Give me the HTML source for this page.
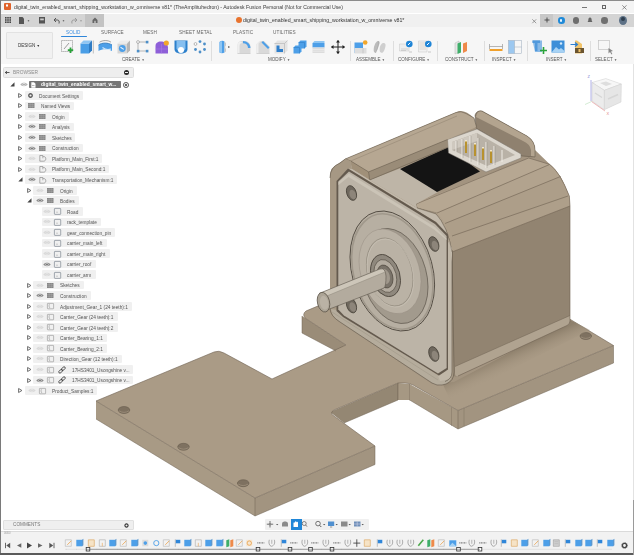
<!DOCTYPE html><html><head><meta charset="utf-8"><style>
*{box-sizing:border-box;margin:0;padding:0}
html,body{width:634px;height:555px;overflow:hidden;background:#fff;font-family:"Liberation Sans",sans-serif;position:relative}
.a{position:absolute}
.tx{position:absolute;white-space:nowrap;line-height:1;will-change:transform}
svg{position:absolute;overflow:visible}
.pill{position:absolute}
</style></head><body><svg style="left:0;top:0" width="634" height="555" viewBox="0 0 634 555"><path d="M96 401 L255 498 L255 516 L96 419 Z" fill="#a89a85"/><path d="M255 498 L375 446 L375 464.5 L255 516 Z" fill="#a29480"/><path d="M330 412 L398 383 L398 400 L344 423 Z" fill="#948773"/><path d="M398 383 L409.6 384 L458 410.5 L458 429 L409.6 400 L398 400 Z" fill="#a69883"/><path d="M458 410.5 L613.5 345.5 L613.5 363 L458 429 Z" fill="#a29480"/><path d="M302 316 L346 345 L336 351 L302 333 Z" fill="#9a8c78"/><path d="M96 401 L214 352 Q219 350 224 353 L272 379 L346 345 L305 318 Q302 314 306 311 L420 262 L568 318 L613.5 345.5 L458 410.5 L413 385 Q409 383 405 383 L398 383 L334 410 Q329 413 334 416 L375 446 L255 498 Z" fill="#aa9b86"/><path d="M96 401 L214 352 Q219 350 224 353 L272 379 L346 345 L305 318 Q302 314 306 311 L330 301 M568 318 L613.5 345.5 L458 410.5 L413 385 Q409 383 405 383 L398 383 L334 410 Q329 413 334 416 L375 446 L255 498 L96 401" fill="none" stroke="#6e6252" stroke-width="0.6"/><path d="M96 419 L255 516 L375 464.5 L375 446 M255 498 L255 516 M458 410.5 L458 429 L613.5 363 L613.5 345.5 M398 383 L398 400 L344 423 M409.6 400 L458 429 M302 316 L302 333 L336 351" fill="none" stroke="#6e6252" stroke-width="0.5"/><path d="M397.5 383 V400 M409.5 384 V400.5 M451.5 407.5 V426 M464 408 V426" stroke="#7d7060" stroke-width="0.45"/><ellipse cx="124" cy="410" rx="5.8" ry="3.5" fill="#7e7160" stroke="#5e5447" stroke-width="0.5"/><path d="M119 410.8 Q124 414 129 410.8" fill="none" stroke="#a99b86" stroke-width="0.6"/><ellipse cx="183.5" cy="446.8" rx="5.8" ry="3.5" fill="#7e7160" stroke="#5e5447" stroke-width="0.5"/><path d="M178.5 447.6 Q183.5 450.8 188.5 447.6" fill="none" stroke="#a99b86" stroke-width="0.6"/><ellipse cx="243.2" cy="483.2" rx="5.8" ry="3.5" fill="#7e7160" stroke="#5e5447" stroke-width="0.5"/><path d="M238.2 484.0 Q243.2 487.2 248.2 484.0" fill="none" stroke="#a99b86" stroke-width="0.6"/><ellipse cx="585.8" cy="336" rx="5.8" ry="3.5" fill="#7e7160" stroke="#5e5447" stroke-width="0.5"/><path d="M580.8 336.8 Q585.8 340 590.8 336.8" fill="none" stroke="#a99b86" stroke-width="0.6"/><defs><linearGradient id="sh1" gradientUnits="userSpaceOnUse" x1="512" y1="351" x2="520" y2="369"><stop offset="0" stop-color="#8e806c"/><stop offset="1" stop-color="#aa9b86" stop-opacity="0"/></linearGradient></defs><path d="M440 378 L570 320 L590 330 L450 400 Z" fill="url(#sh1)"/><path d="M330 176 Q330 167 338 164 L345 159 L459 111 Q466 110 474 118 L476.5 127 L476 116 Q478 110 482 111 L527 136 Q535 141 535 150 L549.5 164 Q560 172 569.3 196 L570 206 L570 321 L454 382 L432 384 L338 321 L330 308 Z" fill="#a39480"/><path d="M452 252 L570 206 L570 321 Q570 324 567 325.5 L458 376 Q453 378 452 373 Z" fill="#928471"/><path d="M455 366.5 L570 315.5 L570 321 Q570 324 567 325.5 L458 376 Q455 377 455 374 Z" fill="#b0a390"/><path d="M455 366.5 L570 315.5" stroke="#6e6252" stroke-width="0.5"/><path d="M570 321 Q570 324 567 325.5 L458 376" fill="none" stroke="#6e6252" stroke-width="0.6"/><path d="M416 204 L528.7 158 L549.5 164.3 Q560 172 569.3 196 L570 206 L452 252 Q450 240 446 230 Q441 219 436 214 L417 208 Z" fill="#ae9f8a"/><path d="M416 203 L528.7 158 L549.5 164.5 L437 213 L417 208 Z" fill="#b6a792"/><path d="M437 213 L549.5 164.5 Q555 169 560.5 176.5 L445 223.5 Q441 217 437 213 Z" fill="#b2a38e"/><path d="M445 223.5 L560.5 176.5 Q565 184 568 196 L452 236 Q449 229 445 223.5 Z" fill="#ad9e89"/><path d="M416 203 L417 208 L437 213" fill="none" stroke="#7a6e5e" stroke-width="0.5"/><path d="M437 213 L549.5 164.5 M445 223.5 L560.5 176.5 M452 236 L568 196 M452 252 L570 206" fill="none" stroke="#6e6252" stroke-width="0.6"/><path d="M416 204 L528.7 158 L549.5 164.3 Q560 172 569.3 196 L570 206 L570 321" fill="none" stroke="#6e6252" stroke-width="0.6"/><path d="M346 172 L352 165 L370 180 L401 168 L438 192 L416 204 L417 208 L400 198 L349 172 Z" fill="#beb5a7"/><path d="M400 169 L448 147.5 L480 171.5 L437 192 Z" fill="#141414"/><path d="M475 115 Q477 110 482 111 L527 136 Q535 141 535 150 L535 157 L522 156 L476 128 Z" fill="#8f816f"/><path d="M481 111 L527 136 Q535 141 535 150 L535 157 L531 156 L531 150 Q530 144 523 141 L476 117 Q477 111 481 111 Z" fill="#b3a48f"/><path d="M475 115 Q477 110 482 111 L527 136 Q535 141 535 150 L535 157 L522 156 L476 128 Z" fill="none" stroke="#5e5447" stroke-width="0.5"/><path d="M447.5 139.5 L477 129 L521 154 L521 158 L486 172 L448.5 153 Z" fill="#dcd7ce"/><path d="M452 142 L477 133 L515 155 L487 166 L452 150 Z" fill="#b9b2a7"/><path d="M452 142 L477 133 L477 141 L452 150 Z" fill="#cfc9bf"/><path d="M447.5 139.5 L477 129 L521 154 L521 158 L486 172 L448.5 153 Z" fill="none" stroke="#7b756c" stroke-width="0.5"/><path d="M456 141 V152 M462 139 V158 M470 136 V162 M478 138 V165 M486 142 V168 M494 146 V165 M502 150 V162" stroke="#efebe4" stroke-width="1.0"/><path d="M457 141 V152 M463 139 V158 M471 136 V162 M479 138 V165 M487 142 V168 M495 146 V165" stroke="#8c867c" stroke-width="0.4"/><rect x="465" y="140" width="2" height="13" fill="#b8922e"/><rect x="465" y="140" width="2" height="1.5" fill="#f0e6c8"/><rect x="474" y="143" width="2" height="13" fill="#b8922e"/><rect x="474" y="143" width="2" height="1.5" fill="#f0e6c8"/><rect x="482" y="147" width="2" height="13" fill="#b8922e"/><rect x="482" y="147" width="2" height="1.5" fill="#f0e6c8"/><rect x="490" y="150" width="2" height="13" fill="#b8922e"/><rect x="490" y="150" width="2" height="1.5" fill="#f0e6c8"/><path d="M345.4 158.9 L456 112.5 Q461 110.5 466 113.5 L474 118 L476.5 127 L447.5 139.5 L368.6 171.9 L350.8 161 Z" fill="#b6a792"/><path d="M350.8 161 L457 116" stroke="#8f816e" stroke-width="0.5"/><path d="M368.6 171.9 L447.5 139.5 L447.5 147.5 L369.7 180 Z" fill="#9a8c78"/><path d="M350.8 161 L368.6 171.9 L369.7 180 L352 169 Z" fill="#a09079"/><path d="M345.4 158.9 L456 112.5 Q461 110.5 466 113.5 L474 118 L476.5 127 M447.5 139.5 L368.6 171.9 L350.8 161 L345.4 158.9 M368.6 171.9 L369.7 180 L447.5 147.5" fill="none" stroke="#5e5447" stroke-width="0.5"/><path d="M330 178 Q330 167 340 163 L345.4 158.9 L350.8 161 L352 169 L369.7 180 L417 208 L436 214 Q441 219 446 230 Q450 240 452 252 L454 372 Q454 381 446 384 L442 385 Q437 386 432 383 L340 322 Q330 316 330 308 Z" fill="#a69884"/><path d="M331 309 L337 310 L439 376 L446 371 L452 372 Q452 381 446 384 L442 385 Q437 386 432 383 L340 322 Q332 317 331 309 Z" fill="#b5ac9c"/><path d="M332 312 L438 380" stroke="#9d9484" stroke-width="0.5"/><path d="M330 178 Q330 167 340 163 L345.4 158.9 M417 208 L436 214 Q441 219 446 230 Q450 240 452 252 L454 372 Q454 381 446 384 L442 385 Q437 386 432 383 L340 322 Q330 316 330 308 Z" fill="none" stroke="#5e5447" stroke-width="0.6"/><path d="M446 238 L452 248 L452 372 Q452 378 446 380 L440 381 L438 376 L446 371 Z" fill="#c0b7a8"/><path d="M452 250 L452 372 Q452 379 445 381.5" fill="none" stroke="#5e5447" stroke-width="0.6"/><path d="M352 169 L369.7 180 L417 208 L436 214 Q441 219 446 230 Q450 240 452 252 L452 262 L448 236 L436 222 L348 168.5 Z" fill="#c2b9ab"/><path d="M417 208 L436 214 Q441 219 446 230 Q450 240 452 252" fill="none" stroke="#7a6e5e" stroke-width="0.5"/><path d="M336.5 181 L348 168.5 L436 222 L448 234.5 L448 369.5 L439 375.5 L343 317 L336.5 311 Z" fill="#645a4e"/><path d="M338.3 181.5 L349 171.5 L435 224 L446.6 236 L446.6 368 L438 373.5 L344 315.5 L338.3 309.5 Z" fill="#bcb4a7"/><path d="M338.5 182 L349 173.5 L435 227 L446.5 238.5 L446.5 240 L434 229.5 L348.5 177 L338.5 185 Z" fill="#cbc4b7"/><ellipse cx="0" cy="0" rx="1" ry="1" transform="matrix(5.1 2.2 0 7.0 351.5 193)" fill="#6f685e" stroke="#4a443b" stroke-width="0.9" vector-effect="non-scaling-stroke"/><ellipse cx="0" cy="0" rx="1" ry="1" transform="matrix(3.3 1.4 0 4.6 352.7 194.5)" fill="#8d857a" stroke="none" stroke-width="1" vector-effect="non-scaling-stroke"/><ellipse cx="0" cy="0" rx="1" ry="1" transform="matrix(5.1 2.2 0 7.0 433.8 244)" fill="#6f685e" stroke="#4a443b" stroke-width="0.9" vector-effect="non-scaling-stroke"/><ellipse cx="0" cy="0" rx="1" ry="1" transform="matrix(3.3 1.4 0 4.6 435.0 245.5)" fill="#8d857a" stroke="none" stroke-width="1" vector-effect="non-scaling-stroke"/><ellipse cx="0" cy="0" rx="1" ry="1" transform="matrix(5.1 2.2 0 7.0 433.8 354)" fill="#6f685e" stroke="#4a443b" stroke-width="0.9" vector-effect="non-scaling-stroke"/><ellipse cx="0" cy="0" rx="1" ry="1" transform="matrix(3.3 1.4 0 4.6 435.0 355.5)" fill="#8d857a" stroke="none" stroke-width="1" vector-effect="non-scaling-stroke"/><ellipse cx="0" cy="0" rx="1" ry="1" transform="matrix(5.1 2.2 0 7.0 351.5 305.5)" fill="#6f685e" stroke="#4a443b" stroke-width="0.9" vector-effect="non-scaling-stroke"/><ellipse cx="0" cy="0" rx="1" ry="1" transform="matrix(3.3 1.4 0 4.6 352.7 307.0)" fill="#8d857a" stroke="none" stroke-width="1" vector-effect="non-scaling-stroke"/><ellipse cx="0" cy="0" rx="1" ry="1" transform="matrix(42.3 13.96 0 58.35 392.3 271)" fill="#b7afa2" stroke="#4a433a" stroke-width="0.9" vector-effect="non-scaling-stroke"/><ellipse cx="0" cy="0" rx="1" ry="1" transform="matrix(40.6 13.4 0 56.02 392.3 271.5)" fill="none" stroke="#a0988b" stroke-width="1.6" vector-effect="non-scaling-stroke"/><ellipse cx="0" cy="0" rx="1" ry="1" transform="matrix(33.5 11.05 0 46.2 394.5 276)" fill="#a29a8d" stroke="#5a5349" stroke-width="0.7" vector-effect="non-scaling-stroke"/><ellipse cx="0" cy="0" rx="1" ry="1" transform="matrix(31.0 10.23 0 41.04 390 271.3)" fill="#bab2a5" stroke="#8f877b" stroke-width="0.4" vector-effect="non-scaling-stroke"/><ellipse cx="0" cy="0" rx="1" ry="1" transform="matrix(23.3 7.69 0 33.12 389.7 272)" fill="none" stroke="#8a8276" stroke-width="0.7" vector-effect="non-scaling-stroke"/><ellipse cx="0" cy="0" rx="1" ry="1" transform="matrix(23.3 7.69 0 33.12 390.4 273)" fill="none" stroke="#cdc6ba" stroke-width="0.6" vector-effect="non-scaling-stroke"/><ellipse cx="0" cy="0" rx="1" ry="1" transform="matrix(15.0 4.95 0 20.41 385.5 275.5)" fill="#8f887d" stroke="#4a433a" stroke-width="0.9" vector-effect="non-scaling-stroke"/><ellipse cx="0" cy="0" rx="1" ry="1" transform="matrix(11.5 3.8 0 16.06 385.3 276)" fill="#b3ab9f" stroke="#5e574d" stroke-width="0.8" vector-effect="non-scaling-stroke"/><ellipse cx="0" cy="0" rx="1" ry="1" transform="matrix(8.0 2.64 0 11.19 385 276.5)" fill="#7a7369" stroke="#4a433a" stroke-width="0.7" vector-effect="non-scaling-stroke"/><ellipse cx="0" cy="0" rx="1" ry="1" transform="matrix(5.0 1.65 0 7.32 385 276.5)" fill="#a0988c" stroke="none" stroke-width="0" vector-effect="non-scaling-stroke"/><path d="M319.2 293.4 L380 269 Q385.5 267.5 386 276 Q386 286.5 384 288 L325.6 310.5 Z" fill="#b3ab9e"/><path d="M319.2 293.4 L380 269 Q384 268 385 272 L322 298 Z" fill="#cdc6b9"/><path d="M319.2 293.4 L380 269 Q385.5 267.5 386 276 Q386 286.5 384 288 L325.6 310.5" fill="none" stroke="#5c554b" stroke-width="0.6"/><path d="M322 298 L385 272" fill="none" stroke="#8d867b" stroke-width="0.5"/><ellipse cx="0" cy="0" rx="1" ry="1" transform="matrix(6.3 2.1 0 9.6 323.5 302.2)" fill="#aca496" stroke="#5a5348" stroke-width="0.8" vector-effect="non-scaling-stroke"/><ellipse cx="0" cy="0" rx="1" ry="1" transform="matrix(4.3 1.4 0 6.8 324.2 302.8)" fill="#bab2a5" stroke="none" stroke-width="1" vector-effect="non-scaling-stroke"/>
<path d="M592 82.5 L605.8 78.6 L621.3 84 L621 102 L604.3 109.7 L592 101 Z" fill="#f1f1f1"/>
<path d="M592 82.5 L605.8 78.6 L621.3 84 L604.3 90.3 Z" fill="#f7f7f7" stroke="#d0d0d0" stroke-width="0.5"/>
<path d="M604.3 90.3 L621.3 84 L621 102 L604.3 109.7 Z" fill="#e6e6e6" stroke="#cfcfcf" stroke-width="0.5"/>
<path d="M592 82.5 L604.3 90.3 L604.3 109.7 L592 101 Z" fill="#ececec" stroke="#cfcfcf" stroke-width="0.5"/>
<path d="M600 83 L606 81.5 L612 84 L606 86 Z" fill="#dedede"/>
<path d="M595 93 L602 97.5 M608 99 L618 94.5" stroke="#d6d6d6" stroke-width="1.4"/>
<path d="M591 101 L591 80" stroke="#8f8fdc" stroke-width="0.7"/>
<path d="M591.5 101.5 L605 111" stroke="#e79a9a" stroke-width="0.7"/>
<path d="M591.5 101.5 L585 104.5" stroke="#a9d8a9" stroke-width="0.5"/>
<text x="587.5" y="78" font-size="4" fill="#8080d0" font-family="Liberation Sans">Z</text>
<text x="606.5" y="114.5" font-size="4" fill="#e08080" font-family="Liberation Sans">X</text>
</svg><div class="a" style="left:0;top:0;width:634px;height:13px;background:#f4f4f4"></div>
<div class="a" style="left:0;top:0;width:634px;height:1px;background:#8c8c8c"></div>
<div class="a" style="left:4px;top:3px;width:6.5px;height:6.5px;background:#e0622a;border-radius:1px"></div>
<div class="a" style="left:6.3px;top:4.3px;width:2px;height:3px;border:0.8px solid #fff;border-radius:1px"></div>
<div class="tx" style="left:13.8px;top:5.0px;font-size:5.15px;color:#3a3a3a">digital_twin_enabled_smart_shipping_workstation_w_omniverse v81* (TheAmplituhedron) - Autodesk Fusion Personal (Not for Commercial Use)</div>
<div class="a" style="left:582px;top:7px;width:4.5px;height:0.7px;background:#777"></div>
<div class="a" style="left:601.5px;top:4.5px;width:4.5px;height:4.5px;border:0.7px solid #666"></div>
<svg style="left:621.5px;top:4.5px" width="5" height="5"><path d="M0.3 0.3L4.5 4.5M4.5 0.3L0.3 4.5" stroke="#666" stroke-width="0.7"/></svg>
<div class="a" style="left:0;top:13.5px;width:634px;height:13.5px;background:#d4d4d4"></div>
<div class="a" style="left:103.5px;top:14.3px;width:436.5px;height:12.7px;background:#f0f0f0"></div>
<div class="a" style="left:85px;top:14.3px;width:18.5px;height:12.7px;background:#c3c3c3"></div>
<div class="a" style="left:540px;top:14.3px;width:13px;height:12.7px;background:#c8c8c8"></div>
<svg style="left:4.5px;top:17px" width="7" height="7"><rect x="0.0" y="0.0" width="1.6" height="1.6" fill="#444"/><rect x="0.0" y="2.2" width="1.6" height="1.6" fill="#444"/><rect x="0.0" y="4.4" width="1.6" height="1.6" fill="#444"/><rect x="2.2" y="0.0" width="1.6" height="1.6" fill="#444"/><rect x="2.2" y="2.2" width="1.6" height="1.6" fill="#444"/><rect x="2.2" y="4.4" width="1.6" height="1.6" fill="#444"/><rect x="4.4" y="0.0" width="1.6" height="1.6" fill="#444"/><rect x="4.4" y="2.2" width="1.6" height="1.6" fill="#444"/><rect x="4.4" y="4.4" width="1.6" height="1.6" fill="#444"/></svg>
<svg style="left:19px;top:16.5px" width="12" height="8"><path d="M0 0H3.5L5 1.5V7H0Z" fill="#555"/><circle cx="9.5" cy="3.8" r="0.8" fill="#666"/></svg>
<svg style="left:39px;top:16.5px" width="7" height="7"><rect x="0" y="0" width="6" height="6.5" fill="#555"/><rect x="1.2" y="1.5" width="3.6" height="1.8" fill="#ccc"/></svg>
<svg style="left:53px;top:16.5px" width="12" height="8"><path d="M1 3L3 1M1 3L3 5M1 3H4.5C6 3 6.5 4.5 6 6.5" stroke="#555" stroke-width="1" fill="none"/><circle cx="10.5" cy="3.8" r="0.8" fill="#666"/></svg>
<svg style="left:71px;top:16.5px" width="12" height="8"><path d="M6 3L4 1M6 3L4 5M6 3H2.5C1 3 0.5 4.5 1 6.5" stroke="#999" stroke-width="1" fill="none"/><circle cx="10" cy="3.8" r="0.8" fill="#999"/></svg>
<svg style="left:91.5px;top:17px" width="7" height="7"><path d="M0.5 3L3 0.5L5.5 3V6H0.5Z" fill="#666"/><rect x="2.3" y="3.8" width="1.4" height="2.2" fill="#c3c3c3"/></svg>
<div class="a" style="left:236px;top:17px;width:6px;height:6px;border-radius:50%;background:#e8732e"></div>
<div class="tx" style="left:242.5px;top:18.2px;font-size:5.25px;color:#333">digital_twin_enabled_smart_shipping_workstation_w_omniverse v81*</div>
<svg style="left:531.5px;top:18.5px" width="5" height="5"><path d="M0.3 0.3L4.2 4.2M4.2 0.3L0.3 4.2" stroke="#777" stroke-width="0.7"/></svg>
<svg style="left:543.5px;top:17px" width="7" height="7"><path d="M3 0.5V5.5M0.5 3H5.5" stroke="#444" stroke-width="0.9"/></svg>
<div class="a" style="left:558px;top:17px;width:6.5px;height:6.5px;border-radius:50%;background:#1f8ad8"></div>
<div class="a" style="left:560.3px;top:18.6px;width:2px;height:3.2px;border-radius:1px;background:#e8f4ff"></div>
<div class="a" style="left:572.5px;top:17px;width:6.5px;height:6.5px;border-radius:50%;background:#6e6e6e"></div>
<svg style="left:587px;top:17px" width="7" height="7"><path d="M3 0.5C1.5 0.5 1.3 2 1.3 3.5L0.6 5H5.4L4.7 3.5C4.7 2 4.5 0.5 3 0.5Z" fill="#666"/></svg>
<div class="a" style="left:601px;top:17px;width:6.5px;height:6.5px;border-radius:50%;background:#707070"></div>
<div class="a" style="left:619px;top:16px;width:8px;height:9px;border-radius:50%;background:#5d7186"></div>
<div class="a" style="left:621px;top:17px;width:4px;height:4px;border-radius:50%;background:#2f3e4e"></div>
<div class="a" style="left:0;top:27px;width:634px;height:37px;background:#f6f6f6"></div>
<div class="a" style="left:5.5px;top:32px;width:47px;height:27px;background:#f1f1f1;border:1px solid #e2e2e2;border-radius:1px"></div>
<div class="tx" style="left:18px;top:44.2px;font-size:4.5px;color:#333">DESIGN <span style="font-size:3.5px">&#9660;</span></div>
<div class="tx" style="left:66.4px;top:31.0px;font-size:4.7px;color:#3c8ee0;letter-spacing:0.1px">SOLID</div>
<div class="tx" style="left:100.5px;top:31.0px;font-size:4.7px;color:#666;letter-spacing:0.1px">SURFACE</div>
<div class="tx" style="left:143px;top:31.0px;font-size:4.7px;color:#666;letter-spacing:0.1px">MESH</div>
<div class="tx" style="left:178.7px;top:31.0px;font-size:4.7px;color:#666;letter-spacing:0.1px">SHEET METAL</div>
<div class="tx" style="left:232.7px;top:31.0px;font-size:4.7px;color:#666;letter-spacing:0.1px">PLASTIC</div>
<div class="tx" style="left:273px;top:31.0px;font-size:4.7px;color:#666;letter-spacing:0.1px">UTILITIES</div>
<div class="a" style="left:61px;top:36px;width:25.5px;height:1.3px;background:#2f86d9;border-radius:1px"></div>
<div class="tx" style="left:122px;top:57.6px;font-size:4.55px;color:#555">CREATE <span style="font-size:3.2px">&#9660;</span></div>
<div class="tx" style="left:268px;top:57.6px;font-size:4.55px;color:#555">MODIFY <span style="font-size:3.2px">&#9660;</span></div>
<div class="tx" style="left:356px;top:57.6px;font-size:4.55px;color:#555">ASSEMBLE <span style="font-size:3.2px">&#9660;</span></div>
<div class="tx" style="left:398px;top:57.6px;font-size:4.55px;color:#555">CONFIGURE <span style="font-size:3.2px">&#9660;</span></div>
<div class="tx" style="left:444.7px;top:57.6px;font-size:4.55px;color:#555">CONSTRUCT <span style="font-size:3.2px">&#9660;</span></div>
<div class="tx" style="left:491.7px;top:57.6px;font-size:4.55px;color:#555">INSPECT <span style="font-size:3.2px">&#9660;</span></div>
<div class="tx" style="left:546px;top:57.6px;font-size:4.55px;color:#555">INSERT <span style="font-size:3.2px">&#9660;</span></div>
<div class="tx" style="left:595px;top:57.6px;font-size:4.55px;color:#555">SELECT <span style="font-size:3.2px">&#9660;</span></div>
<div class="a" style="left:211px;top:41px;width:0.8px;height:20px;background:#dedede"></div>
<div class="a" style="left:350px;top:41px;width:0.8px;height:20px;background:#dedede"></div>
<div class="a" style="left:393px;top:41px;width:0.8px;height:20px;background:#dedede"></div>
<div class="a" style="left:437px;top:41px;width:0.8px;height:20px;background:#dedede"></div>
<div class="a" style="left:484px;top:41px;width:0.8px;height:20px;background:#dedede"></div>
<div class="a" style="left:527px;top:41px;width:0.8px;height:20px;background:#dedede"></div>
<div class="a" style="left:590px;top:41px;width:0.8px;height:20px;background:#dedede"></div>
<svg style="left:61px;top:40px" width="14" height="14" viewBox="0 0 14 14"><rect x="0.5" y="0.5" width="11" height="11" fill="none" stroke="#666" stroke-width="0.6" stroke-dasharray="1.2 0.8"/><path d="M3 9L8 3" stroke="#777" stroke-width="0.7"/><path d="M9.5 7.5V13M6.8 10.2H12.2" stroke="#2aa33a" stroke-width="1.8"/></svg>
<svg style="left:80px;top:40px" width="14" height="14" viewBox="0 0 14 14"><path d="M0.5 3.5H9V13.5H0.5Z" fill="#4a9ee6"/><path d="M0.5 3.5L3.5 0.5H12L9 3.5Z" fill="#8fc6f3"/><path d="M9 3.5L12 0.5V10.5L9 13.5Z" fill="#2f7cc4"/><path d="M13.3 0.5V13.5" stroke="#666" stroke-width="0.4"/></svg>
<svg style="left:98px;top:40px" width="15" height="14" viewBox="0 0 15 14"><path d="M0.5 5C4 2.5 10 2.5 14 5V11C10 8.5 4 8.5 0.5 11Z" fill="#4d9fe8"/><path d="M0.5 5C4 2.5 10 2.5 14 5" stroke="#2d79c0" stroke-width="0.9" fill="none"/><path d="M1.5 2.2C5 0 10 0 13 2.2" stroke="#555" stroke-width="0.5" fill="none"/><path d="M4.5 7.5C7 9.5 10 10 13 9" stroke="#d3e8f9" stroke-width="1.1" fill="none"/></svg>
<svg style="left:117px;top:40px" width="14" height="14" viewBox="0 0 14 14"><path d="M0.5 3.5H10V13.5H0.5Z" fill="#d6d6d6"/><path d="M0.5 3.5L3.5 0.5H13L10 3.5Z" fill="#ececec"/><path d="M10 3.5L13 0.5V10.5L10 13.5Z" fill="#b5b5b5"/><ellipse cx="5.3" cy="8.5" rx="3.4" ry="3.4" fill="#4d9fe8"/><path d="M3.5 7.2L6.8 9.4" stroke="#e8f3fc" stroke-width="1.1"/></svg>
<svg style="left:136px;top:40px" width="14" height="13" viewBox="0 0 14 13"><path d="M2 2H11M2 2V11M2 11H11" stroke="#777" stroke-width="0.5"/><circle cx="2" cy="2" r="1.4" fill="#fff" stroke="#777" stroke-width="0.5"/><rect x="9.8" y="0.8" width="2.6" height="2.6" fill="#4d8fc8"/><rect x="0.8" y="9.8" width="2.6" height="2.6" fill="#4d8fc8"/><rect x="9.8" y="9.8" width="2.6" height="2.6" fill="#4d8fc8"/></svg>
<svg style="left:155px;top:40px" width="14" height="14" viewBox="0 0 14 14"><path d="M0.5 6C0.5 2.5 3.5 1 7 1.5C10.5 2 13 4.5 13 8V13.5H0.5Z" fill="#8e5fd8"/><path d="M6.5 4V13.5M0.5 9H13" stroke="#a882e6" stroke-width="0.5"/><circle cx="11.3" cy="3" r="2.6" fill="#f2a72b"/></svg>
<svg style="left:174px;top:40px" width="14" height="14" viewBox="0 0 14 14"><path d="M0.5 0.5H13.5V9C13.5 12 11 13.5 7 13.5S0.5 12 0.5 9Z" fill="#2d80cc"/><path d="M2.5 1H11.5V8.5C11.5 10 9.5 11.5 7 11.5S2.5 10 2.5 8.5Z" fill="#86bff0"/><circle cx="7" cy="10" r="3" fill="#fff"/></svg>
<svg style="left:192.5px;top:40px" width="14" height="14" viewBox="0 0 14 14"><circle cx="7" cy="1.6" r="1.4" fill="#4d8fc8"/><circle cx="11.5" cy="4" r="1.4" fill="#4d8fc8"/><circle cx="11.5" cy="9.5" r="1.4" fill="#4d8fc8"/><circle cx="7" cy="12" r="1.4" fill="#4d8fc8"/><circle cx="2.5" cy="9.5" r="1.4" fill="#4d8fc8"/><circle cx="2.5" cy="4" r="1.4" fill="#fff" stroke="#777" stroke-width="0.5"/></svg>
<svg style="left:217.5px;top:40px" width="13" height="14" viewBox="0 0 13 14"><path d="M1.5 2C3 0.5 5 0.5 6.5 1.5V12.5C5 13.5 3 13.5 1.5 12.5Z" fill="#4d9fe8"/><path d="M1.5 2C2.5 1.3 3.5 1.2 4 1.5V12.8C3 13 2 12.8 1.5 12.5Z" fill="#8fc6f3"/><path d="M6.5 1.5L8 3V5.5C7 6.5 7 8 8 9V11.5L6.5 12.5Z" fill="#c8c8c8"/><circle cx="10.8" cy="7" r="0.8" fill="#333"/></svg>
<svg style="left:236.5px;top:40px" width="14" height="14" viewBox="0 0 14 14"><path d="M0.5 13.5V5C0.5 2.5 2.5 1 5 1H8C11 1 13.5 3.5 13.5 6.5V13.5Z" fill="#d9d9d9"/><path d="M0.5 5C0.5 3 2 1.5 4 1.5L5.5 3C3.5 3 2.5 4 2.5 6V13.5H0.5Z" fill="#efefef"/><path d="M6 1C10 1 13.5 4 13.5 8H11C11 5 9 3.2 6 3.2Z" fill="#4d9fe8"/><path d="M0.5 13.5H13.5" stroke="#bbb" stroke-width="0.5"/></svg>
<svg style="left:255.5px;top:40px" width="14" height="14" viewBox="0 0 14 14"><path d="M0.5 13.5V4L3.5 1H8L13.5 6.5V13.5Z" fill="#d9d9d9"/><path d="M0.5 4L3.5 1H5L2.5 3.5V13.5H0.5Z" fill="#efefef"/><path d="M7 1L13.5 7.5L12 9L5.5 2.5Z" fill="#4d9fe8"/><path d="M0.5 13.5H13.5" stroke="#bbb" stroke-width="0.5"/></svg>
<svg style="left:274px;top:40px" width="14" height="14" viewBox="0 0 14 14"><path d="M0.5 3.5L3.5 0.5H13.5V10.5L10.5 13.5H0.5Z" fill="#e4e4e4"/><path d="M0.5 3.5H10.5V13.5" fill="none" stroke="#a8a8a8" stroke-width="0.5"/><path d="M10.5 3.5L13.5 0.5" stroke="#a8a8a8" stroke-width="0.5"/><path d="M2.5 5.5H5.5V9H9V12H2.5Z" fill="#2f7fcb"/></svg>
<svg style="left:293px;top:40px" width="14" height="14" viewBox="0 0 14 14"><path d="M5.5 2.5L7.5 0.5H13.5V6.5L11.5 8.5H5.5Z" fill="#4d9fe8"/><path d="M5.5 2.5H11.5V8.5" fill="none" stroke="#2d79c0" stroke-width="0.5"/><path d="M0.5 7.5L2.5 5.5H8.5V11.5L6.5 13.5H0.5Z" fill="#4d9fe8"/><path d="M0.5 7.5H6.5V13.5" fill="none" stroke="#2d79c0" stroke-width="0.5"/><path d="M7.5 0.5L5.5 2.5M2.5 5.5L0.5 7.5" stroke="#a7d2f4" stroke-width="0.6"/></svg>
<svg style="left:312px;top:40px" width="13" height="14" viewBox="0 0 13 14"><path d="M0.5 3L2.5 1H12.5V3Z" fill="#8ec5f2"/><path d="M0.5 3H12.5V7.5H0.5Z" fill="#4d9fe8"/><path d="M0.5 7.5H12.5V13H0.5Z" fill="#dcdcdc"/><path d="M0.5 9.5H12.5M0.5 11.2H12.5" stroke="#f5f5f5" stroke-width="0.5"/></svg>
<svg style="left:331px;top:40px" width="14" height="14" viewBox="0 0 14 14"><path d="M7 0.5V13.5M0.5 7H13.5" stroke="#222" stroke-width="1"/><path d="M7 0L5 2.5H9ZM7 14L5 11.5H9ZM0 7L2.5 5V9ZM14 7L11.5 5V9Z" fill="#222"/></svg>
<svg style="left:354px;top:40px" width="14" height="14" viewBox="0 0 14 14"><path d="M0.5 2.5H9V13H0.5Z" fill="#4d9fe8"/><path d="M0.5 8H12.5V13.5H0.5Z" fill="#dedede"/><path d="M9 8V13.5" stroke="#aaa" stroke-width="0.4"/><circle cx="11.2" cy="2.5" r="2.3" fill="#f2a72b"/></svg>
<svg style="left:373px;top:40px" width="14" height="14" viewBox="0 0 14 14"><path d="M1 12C0 8 2 2 5 1C7 0.5 7 3 6 5C5 8 4 11 2.5 13Z" fill="#bcbcbc"/><path d="M7 12C6 9 7 4 10 3C12 2.5 13 4 12.5 6C12 9 11 12 9 13Z" fill="#cfcfcf"/><path d="M5 1C6 3 5 8 2.5 13" stroke="#999" stroke-width="0.4" fill="none"/></svg>
<svg style="left:399px;top:40px" width="15" height="14" viewBox="0 0 15 14"><path d="M0.5 4H10V11H0.5Z" fill="#eeeeee" stroke="#bbb" stroke-width="0.4"/><path d="M2 9H9M2 10.5H7" stroke="#aaa" stroke-width="0.4"/><circle cx="10.3" cy="4" r="3.3" fill="#1e84d6"/><path d="M9 5L11.3 2.7" stroke="#fff" stroke-width="1"/><path d="M10 12H13" stroke="#999" stroke-width="0.5"/></svg>
<svg style="left:418px;top:40px" width="15" height="14" viewBox="0 0 15 14"><path d="M0.5 1H9V12H0.5Z" fill="#f1f1f1" stroke="#bbb" stroke-width="0.4"/><path d="M1.5 3H8M1.5 5H8M1.5 7H8M1.5 9H8" stroke="#c6b9a8" stroke-width="0.5"/><circle cx="10.3" cy="4" r="3.3" fill="#1e84d6"/><path d="M9 5L11.3 2.7" stroke="#fff" stroke-width="1"/><path d="M10 12H13" stroke="#999" stroke-width="0.5"/></svg>
<svg style="left:453.5px;top:40px" width="15" height="14" viewBox="0 0 15 14"><path d="M1 3L5 1V12L1 14Z" fill="#e6e6e6" stroke="#aaa" stroke-width="0.4"/><path d="M3.5 3.5L7 2V12.5L3.5 14Z" fill="#3fae6a"/><path d="M9 3.5L13 2V11L9 13Z" fill="#ee8a4a"/></svg>
<svg style="left:489px;top:40px" width="14" height="14" viewBox="0 0 14 14"><path d="M0.5 4V9M13.5 4V9M0.5 6.5H13.5" stroke="#8a8a8a" stroke-width="0.6"/><rect x="0.5" y="9" width="13" height="2" fill="#f0a02a"/></svg>
<svg style="left:508px;top:40px" width="14" height="14" viewBox="0 0 14 14"><rect x="0.5" y="0.5" width="6" height="13" fill="#9cc8f0"/><rect x="0.5" y="0.5" width="13" height="13" fill="none" stroke="#9ab" stroke-width="0.5"/><path d="M6.5 0.5V13.5M6.5 7H13.5" stroke="#9ab" stroke-width="0.5"/></svg>
<svg style="left:532px;top:40px" width="15" height="14" viewBox="0 0 15 14"><path d="M0.5 0.5H8V3H5.5V11H3V3H0.5Z" fill="#3d8ad4"/><path d="M0.5 0.5H10V12H3" fill="#5aa0e0" opacity="0.7"/><path d="M11.5 7V14M8 10.5H15" stroke="#2aa33a" stroke-width="1.6"/></svg>
<svg style="left:551px;top:40px" width="14" height="13" viewBox="0 0 14 13"><rect x="0.5" y="0.5" width="13" height="12" fill="#3d8fd8"/><path d="M0.5 12.5L5 7L8 9.5L10 8L13.5 11V12.5Z" fill="#a7d2f4"/><circle cx="10" cy="3.5" r="1.2" fill="#d3e9fa"/></svg>
<svg style="left:570px;top:40px" width="15" height="14" viewBox="0 0 15 14"><path d="M7 0.5L12 4V13.5H5V0.5Z" fill="#f2c46a"/><rect x="5" y="8" width="9" height="5" fill="#6b5530"/><rect x="8.5" y="9" width="2" height="3" fill="#f2c46a"/><path d="M0.5 4.5H7M5 2.5L7.5 4.5L5 6.5" stroke="#2d7fd0" stroke-width="1.2" fill="none"/></svg>
<svg style="left:597.5px;top:40px" width="16" height="14" viewBox="0 0 16 14"><rect x="0.5" y="0.5" width="11" height="9" fill="none" stroke="#bbb" stroke-width="0.6"/><path d="M10.5 8L10.5 13.5L12 12L13.5 14.5L14.3 14L13 11.5L15 11Z" fill="#888"/></svg>
<div class="a" style="left:0;top:0;width:1px;height:555px;background:#7a7a7a"></div>
<div class="a" style="left:2.5px;top:66.5px;width:131.5px;height:11.5px;background:#eeeeee;border:0.6px solid #dddddd;border-radius:1.5px"></div>
<svg style="left:5px;top:71px" width="5" height="3"><path d="M0.3 1.5H4.5M0.3 1.5L2 0.2M0.3 1.5L2 2.8" stroke="#333" stroke-width="0.8"/></svg>
<div class="tx" style="left:13px;top:70.8px;font-size:4.8px;color:#8a8a8a;letter-spacing:0.05px">BROWSER</div>
<div class="a" style="left:124px;top:69.8px;width:5px;height:5px;border-radius:50%;background:#2a2a2a"></div>
<div class="a" style="left:125.2px;top:72px;width:2.6px;height:0.7px;background:#eee"></div>
<svg style="left:10px;top:82.3px" width="5" height="5"><path d="M4.5 0.3V4.5H0.3Z" fill="#444"/></svg>
<svg style="left:19.5px;top:82.3px" width="8" height="5"><path d="M0.3 2.5C2 0.2 6 0.2 7.7 2.5C6 4.8 2 4.8 0.3 2.5Z" fill="#b5b5b5"/><circle cx="4" cy="2.5" r="1.4" fill="#e8e8e8"/><circle cx="4" cy="2.5" r="0.8" fill="#999"/></svg>
<div class="a" style="left:28.7px;top:80.89999999999999px;width:92.5px;height:7.2px;background:#767676;border-radius:0.8px"></div>
<svg style="left:30.5px;top:81.8px" width="5" height="6"><path d="M0.3 0.3H3L4.5 1.8V5.7H0.3Z" fill="#fff"/><path d="M1 3.5H3.5" stroke="#777" stroke-width="0.5"/></svg>
<div class="tx" style="left:40.5px;top:83.1px;font-size:4.85px;color:#fff;font-weight:bold;letter-spacing:0.05px">digital_twin_enabled_smart_w...</div>
<div class="a" style="left:123.4px;top:81.8px;width:5.8px;height:5.8px;border-radius:50%;border:0.6px solid #555;background:#f4f4f4"></div>
<div class="a" style="left:125.2px;top:83.6px;width:2.2px;height:2.2px;border-radius:50%;background:#333"></div>
<div class="pill" style="left:25.0px;top:91.045px;height:8.6px;background:#f0f0f0;border-radius:1px;width:57.9px"></div>
<svg style="left:18.0px;top:92.845px" width="5" height="5"><path d="M0.6 0.5L3.9 2.5L0.6 4.5Z" fill="none" stroke="#555" stroke-width="0.85"/></svg>
<svg style="left:27.8px;top:92.845px" width="5" height="5"><circle cx="2.5" cy="2.5" r="1.75" fill="none" stroke="#5a5a5a" stroke-width="1.3"/></svg>
<div class="tx rowt" style="left:38.8px;top:94.645px;font-size:4.75px;color:#555555">Document Settings</div>
<div class="pill" style="left:25.0px;top:101.59px;height:8.6px;background:#f0f0f0;border-radius:1px;width:49.2px"></div>
<svg style="left:18.0px;top:103.39px" width="5" height="5"><path d="M0.6 0.5L3.9 2.5L0.6 4.5Z" fill="none" stroke="#555" stroke-width="0.85"/></svg>
<svg style="left:27.8px;top:103.39px" width="7" height="5"><rect x="0" y="0" width="6.5" height="5" fill="#858585"/><path d="M0 1.6H6.5M0 3.3H6.5" stroke="#bdbdbd" stroke-width="0.35"/><path d="M2.1 0V5M4.3 0V5" stroke="#bdbdbd" stroke-width="0.3"/></svg>
<div class="tx rowt" style="left:41.0px;top:105.19px;font-size:4.75px;color:#555555">Named Views</div>
<div class="pill" style="left:25.0px;top:112.135px;height:8.6px;background:#f0f0f0;border-radius:1px;width:43.6px"></div>
<svg style="left:18.0px;top:113.935px" width="5" height="5"><path d="M0.6 0.5L3.9 2.5L0.6 4.5Z" fill="none" stroke="#555" stroke-width="0.85"/></svg>
<svg style="left:27.6px;top:113.935px" width="8" height="5"><path d="M0.3 2.5C2 0.2 6 0.2 7.7 2.5C6 4.8 2 4.8 0.3 2.5Z" fill="#d9d9d9"/><circle cx="4" cy="2.5" r="1.3" fill="#ececec"/><circle cx="4" cy="2.5" r="0.7" fill="#cfcfcf"/></svg>
<svg style="left:38.6px;top:113.935px" width="7" height="5"><rect x="0" y="0" width="6.5" height="5" fill="#858585"/><path d="M0 1.6H6.5M0 3.3H6.5" stroke="#bdbdbd" stroke-width="0.35"/><path d="M2.1 0V5M4.3 0V5" stroke="#bdbdbd" stroke-width="0.3"/></svg>
<div class="tx rowt" style="left:51.900000000000006px;top:115.735px;font-size:4.75px;color:#555555">Origin</div>
<div class="pill" style="left:25.0px;top:122.67999999999999px;height:8.6px;background:#f0f0f0;border-radius:1px;width:48.6px"></div>
<svg style="left:18.0px;top:124.47999999999999px" width="5" height="5"><path d="M0.6 0.5L3.9 2.5L0.6 4.5Z" fill="none" stroke="#555" stroke-width="0.85"/></svg>
<svg style="left:27.6px;top:124.47999999999999px" width="8" height="5"><path d="M0.3 2.5C2 0.2 6 0.2 7.7 2.5C6 4.8 2 4.8 0.3 2.5Z" fill="#8c8c8c"/><circle cx="4" cy="2.5" r="1.5" fill="#e6e6e6"/><circle cx="4" cy="2.5" r="0.9" fill="#666"/></svg>
<svg style="left:38.6px;top:124.47999999999999px" width="7" height="5"><rect x="0" y="0" width="6.5" height="5" fill="#858585"/><path d="M0 1.6H6.5M0 3.3H6.5" stroke="#bdbdbd" stroke-width="0.35"/><path d="M2.1 0V5M4.3 0V5" stroke="#bdbdbd" stroke-width="0.3"/></svg>
<div class="tx rowt" style="left:51.900000000000006px;top:126.27999999999999px;font-size:4.75px;color:#555555">Analysis</div>
<div class="pill" style="left:25.0px;top:133.225px;height:8.6px;background:#f0f0f0;border-radius:1px;width:50.4px"></div>
<svg style="left:18.0px;top:135.025px" width="5" height="5"><path d="M0.6 0.5L3.9 2.5L0.6 4.5Z" fill="none" stroke="#555" stroke-width="0.85"/></svg>
<svg style="left:27.6px;top:135.025px" width="8" height="5"><path d="M0.3 2.5C2 0.2 6 0.2 7.7 2.5C6 4.8 2 4.8 0.3 2.5Z" fill="#8c8c8c"/><circle cx="4" cy="2.5" r="1.5" fill="#e6e6e6"/><circle cx="4" cy="2.5" r="0.9" fill="#666"/></svg>
<svg style="left:38.6px;top:135.025px" width="7" height="5"><rect x="0" y="0" width="6.5" height="5" fill="#858585"/><path d="M0 1.6H6.5M0 3.3H6.5" stroke="#bdbdbd" stroke-width="0.35"/><path d="M2.1 0V5M4.3 0V5" stroke="#bdbdbd" stroke-width="0.3"/></svg>
<div class="tx rowt" style="left:51.900000000000006px;top:136.82500000000002px;font-size:4.75px;color:#555555">Sketches</div>
<div class="pill" style="left:25.0px;top:143.76999999999998px;height:8.6px;background:#f0f0f0;border-radius:1px;width:57.6px"></div>
<svg style="left:18.0px;top:145.57px" width="5" height="5"><path d="M0.6 0.5L3.9 2.5L0.6 4.5Z" fill="none" stroke="#555" stroke-width="0.85"/></svg>
<svg style="left:27.6px;top:145.57px" width="8" height="5"><path d="M0.3 2.5C2 0.2 6 0.2 7.7 2.5C6 4.8 2 4.8 0.3 2.5Z" fill="#8c8c8c"/><circle cx="4" cy="2.5" r="1.5" fill="#e6e6e6"/><circle cx="4" cy="2.5" r="0.9" fill="#666"/></svg>
<svg style="left:38.6px;top:145.57px" width="7" height="5"><rect x="0" y="0" width="6.5" height="5" fill="#858585"/><path d="M0 1.6H6.5M0 3.3H6.5" stroke="#bdbdbd" stroke-width="0.35"/><path d="M2.1 0V5M4.3 0V5" stroke="#bdbdbd" stroke-width="0.3"/></svg>
<div class="tx rowt" style="left:51.900000000000006px;top:147.37px;font-size:4.75px;color:#555555">Construction</div>
<div class="pill" style="left:25.0px;top:154.315px;height:8.6px;background:#f0f0f0;border-radius:1px;width:77.4px"></div>
<svg style="left:18.0px;top:156.115px" width="5" height="5"><path d="M0.6 0.5L3.9 2.5L0.6 4.5Z" fill="none" stroke="#555" stroke-width="0.85"/></svg>
<svg style="left:27.6px;top:156.115px" width="8" height="5"><path d="M0.3 2.5C2 0.2 6 0.2 7.7 2.5C6 4.8 2 4.8 0.3 2.5Z" fill="#d9d9d9"/><circle cx="4" cy="2.5" r="1.3" fill="#ececec"/><circle cx="4" cy="2.5" r="0.7" fill="#cfcfcf"/></svg>
<svg style="left:38.6px;top:155.41500000000002px" width="8" height="7"><path d="M0.8 0.5H3.8V1.6H4.8C6.2 1.6 6.8 2.6 6.8 3.8C6.8 5.3 5.8 6.2 4.6 6.2H0.8Z" fill="none" stroke="#7a7a7a" stroke-width="0.6"/><path d="M3.8 1.6V3.3" stroke="#7a7a7a" stroke-width="0.5"/></svg>
<div class="tx rowt" style="left:51.900000000000006px;top:157.91500000000002px;font-size:4.75px;color:#555555">Platform_Main_First:1</div>
<div class="pill" style="left:25.0px;top:164.85999999999999px;height:8.6px;background:#f0f0f0;border-radius:1px;width:84.2px"></div>
<svg style="left:18.0px;top:166.66px" width="5" height="5"><path d="M0.6 0.5L3.9 2.5L0.6 4.5Z" fill="none" stroke="#555" stroke-width="0.85"/></svg>
<svg style="left:27.6px;top:166.66px" width="8" height="5"><path d="M0.3 2.5C2 0.2 6 0.2 7.7 2.5C6 4.8 2 4.8 0.3 2.5Z" fill="#d9d9d9"/><circle cx="4" cy="2.5" r="1.3" fill="#ececec"/><circle cx="4" cy="2.5" r="0.7" fill="#cfcfcf"/></svg>
<svg style="left:38.6px;top:165.96px" width="8" height="7"><path d="M0.8 0.5H3.8V1.6H4.8C6.2 1.6 6.8 2.6 6.8 3.8C6.8 5.3 5.8 6.2 4.6 6.2H0.8Z" fill="none" stroke="#7a7a7a" stroke-width="0.6"/><path d="M3.8 1.6V3.3" stroke="#7a7a7a" stroke-width="0.5"/></svg>
<div class="tx rowt" style="left:51.900000000000006px;top:168.46px;font-size:4.75px;color:#555555">Platform_Main_Second:1</div>
<div class="pill" style="left:25.0px;top:175.40499999999997px;height:8.6px;background:#f0f0f0;border-radius:1px;width:92.2px"></div>
<svg style="left:18.0px;top:177.20499999999998px" width="5" height="5"><path d="M4.5 0.3V4.5H0.3Z" fill="#444"/></svg>
<svg style="left:27.6px;top:177.20499999999998px" width="8" height="5"><path d="M0.3 2.5C2 0.2 6 0.2 7.7 2.5C6 4.8 2 4.8 0.3 2.5Z" fill="#8c8c8c"/><circle cx="4" cy="2.5" r="1.5" fill="#e6e6e6"/><circle cx="4" cy="2.5" r="0.9" fill="#666"/></svg>
<svg style="left:38.6px;top:176.505px" width="8" height="7"><path d="M0.8 0.5H3.8V1.6H4.8C6.2 1.6 6.8 2.6 6.8 3.8C6.8 5.3 5.8 6.2 4.6 6.2H0.8Z" fill="none" stroke="#7a7a7a" stroke-width="0.6"/><path d="M3.8 1.6V3.3" stroke="#7a7a7a" stroke-width="0.5"/></svg>
<div class="tx rowt" style="left:51.900000000000006px;top:179.005px;font-size:4.75px;color:#555555">Transportation_Mechanism:1</div>
<div class="pill" style="left:33.2px;top:185.95px;height:8.6px;background:#f0f0f0;border-radius:1px;width:43.9px"></div>
<svg style="left:26.5px;top:187.75px" width="5" height="5"><path d="M0.6 0.5L3.9 2.5L0.6 4.5Z" fill="none" stroke="#555" stroke-width="0.85"/></svg>
<svg style="left:36.1px;top:187.75px" width="8" height="5"><path d="M0.3 2.5C2 0.2 6 0.2 7.7 2.5C6 4.8 2 4.8 0.3 2.5Z" fill="#d9d9d9"/><circle cx="4" cy="2.5" r="1.3" fill="#ececec"/><circle cx="4" cy="2.5" r="0.7" fill="#cfcfcf"/></svg>
<svg style="left:47.1px;top:187.75px" width="7" height="5"><rect x="0" y="0" width="6.5" height="5" fill="#858585"/><path d="M0 1.6H6.5M0 3.3H6.5" stroke="#bdbdbd" stroke-width="0.35"/><path d="M2.1 0V5M4.3 0V5" stroke="#bdbdbd" stroke-width="0.3"/></svg>
<div class="tx rowt" style="left:60.400000000000006px;top:189.55px;font-size:4.75px;color:#555555">Origin</div>
<div class="pill" style="left:33.2px;top:196.495px;height:8.6px;background:#f0f0f0;border-radius:1px;width:45.7px"></div>
<svg style="left:26.5px;top:198.29500000000002px" width="5" height="5"><path d="M4.5 0.3V4.5H0.3Z" fill="#444"/></svg>
<svg style="left:36.1px;top:198.29500000000002px" width="8" height="5"><path d="M0.3 2.5C2 0.2 6 0.2 7.7 2.5C6 4.8 2 4.8 0.3 2.5Z" fill="#8c8c8c"/><circle cx="4" cy="2.5" r="1.5" fill="#e6e6e6"/><circle cx="4" cy="2.5" r="0.9" fill="#666"/></svg>
<svg style="left:47.1px;top:198.29500000000002px" width="7" height="5"><rect x="0" y="0" width="6.5" height="5" fill="#858585"/><path d="M0 1.6H6.5M0 3.3H6.5" stroke="#bdbdbd" stroke-width="0.35"/><path d="M2.1 0V5M4.3 0V5" stroke="#bdbdbd" stroke-width="0.3"/></svg>
<div class="tx rowt" style="left:60.400000000000006px;top:200.09500000000003px;font-size:4.75px;color:#555555">Bodies</div>
<div class="pill" style="left:42.0px;top:207.03999999999996px;height:8.6px;background:#f0f0f0;border-radius:1px;width:40.7px"></div>
<svg style="left:43.0px;top:208.83999999999997px" width="8" height="5"><path d="M0.3 2.5C2 0.2 6 0.2 7.7 2.5C6 4.8 2 4.8 0.3 2.5Z" fill="#d9d9d9"/><circle cx="4" cy="2.5" r="1.3" fill="#ececec"/><circle cx="4" cy="2.5" r="0.7" fill="#cfcfcf"/></svg>
<svg style="left:54.0px;top:208.33999999999997px" width="8" height="7"><rect x="0.4" y="0.4" width="6.3" height="6" fill="none" stroke="#5f6b78" stroke-width="0.55" rx="0.6"/><path d="M2.2 4.2H3.8" stroke="#777" stroke-width="0.4"/></svg>
<div class="tx rowt" style="left:67.3px;top:210.64px;font-size:4.75px;color:#555555">Road</div>
<div class="pill" style="left:42.0px;top:217.58499999999998px;height:8.6px;background:#f0f0f0;border-radius:1px;width:59.1px"></div>
<svg style="left:43.0px;top:219.385px" width="8" height="5"><path d="M0.3 2.5C2 0.2 6 0.2 7.7 2.5C6 4.8 2 4.8 0.3 2.5Z" fill="#d9d9d9"/><circle cx="4" cy="2.5" r="1.3" fill="#ececec"/><circle cx="4" cy="2.5" r="0.7" fill="#cfcfcf"/></svg>
<svg style="left:54.0px;top:218.885px" width="8" height="7"><rect x="0.4" y="0.4" width="6.3" height="6" fill="none" stroke="#5f6b78" stroke-width="0.55" rx="0.6"/><path d="M2.2 4.2H3.8" stroke="#777" stroke-width="0.4"/></svg>
<div class="tx rowt" style="left:67.3px;top:221.185px;font-size:4.75px;color:#555555">rack_template</div>
<div class="pill" style="left:42.0px;top:228.13px;height:8.6px;background:#f0f0f0;border-radius:1px;width:73.4px"></div>
<svg style="left:43.0px;top:229.93px" width="8" height="5"><path d="M0.3 2.5C2 0.2 6 0.2 7.7 2.5C6 4.8 2 4.8 0.3 2.5Z" fill="#d9d9d9"/><circle cx="4" cy="2.5" r="1.3" fill="#ececec"/><circle cx="4" cy="2.5" r="0.7" fill="#cfcfcf"/></svg>
<svg style="left:54.0px;top:229.43px" width="8" height="7"><rect x="0.4" y="0.4" width="6.3" height="6" fill="none" stroke="#5f6b78" stroke-width="0.55" rx="0.6"/><path d="M2.2 4.2H3.8" stroke="#777" stroke-width="0.4"/></svg>
<div class="tx rowt" style="left:67.3px;top:231.73000000000002px;font-size:4.75px;color:#555555">gear_connection_pin</div>
<div class="pill" style="left:42.0px;top:238.675px;height:8.6px;background:#f0f0f0;border-radius:1px;width:64.7px"></div>
<svg style="left:43.0px;top:240.47500000000002px" width="8" height="5"><path d="M0.3 2.5C2 0.2 6 0.2 7.7 2.5C6 4.8 2 4.8 0.3 2.5Z" fill="#d9d9d9"/><circle cx="4" cy="2.5" r="1.3" fill="#ececec"/><circle cx="4" cy="2.5" r="0.7" fill="#cfcfcf"/></svg>
<svg style="left:54.0px;top:239.97500000000002px" width="8" height="7"><rect x="0.4" y="0.4" width="6.3" height="6" fill="none" stroke="#5f6b78" stroke-width="0.55" rx="0.6"/><path d="M2.2 4.2H3.8" stroke="#777" stroke-width="0.4"/></svg>
<div class="tx rowt" style="left:67.3px;top:242.27500000000003px;font-size:4.75px;color:#555555">carrier_main_left</div>
<div class="pill" style="left:42.0px;top:249.21999999999997px;height:8.6px;background:#f0f0f0;border-radius:1px;width:67.6px"></div>
<svg style="left:43.0px;top:251.01999999999998px" width="8" height="5"><path d="M0.3 2.5C2 0.2 6 0.2 7.7 2.5C6 4.8 2 4.8 0.3 2.5Z" fill="#d9d9d9"/><circle cx="4" cy="2.5" r="1.3" fill="#ececec"/><circle cx="4" cy="2.5" r="0.7" fill="#cfcfcf"/></svg>
<svg style="left:54.0px;top:250.51999999999998px" width="8" height="7"><rect x="0.4" y="0.4" width="6.3" height="6" fill="none" stroke="#5f6b78" stroke-width="0.55" rx="0.6"/><path d="M2.2 4.2H3.8" stroke="#777" stroke-width="0.4"/></svg>
<div class="tx rowt" style="left:67.3px;top:252.82px;font-size:4.75px;color:#555555">carrier_main_right</div>
<div class="pill" style="left:42.0px;top:259.765px;height:8.6px;background:#f0f0f0;border-radius:1px;width:53.6px"></div>
<svg style="left:43.0px;top:261.565px" width="8" height="5"><path d="M0.3 2.5C2 0.2 6 0.2 7.7 2.5C6 4.8 2 4.8 0.3 2.5Z" fill="#8c8c8c"/><circle cx="4" cy="2.5" r="1.5" fill="#e6e6e6"/><circle cx="4" cy="2.5" r="0.9" fill="#666"/></svg>
<svg style="left:54.0px;top:261.065px" width="8" height="7"><rect x="0.4" y="0.4" width="6.3" height="6" fill="none" stroke="#5f6b78" stroke-width="0.55" rx="0.6"/><path d="M2.2 4.2H3.8" stroke="#777" stroke-width="0.4"/></svg>
<div class="tx rowt" style="left:67.3px;top:263.365px;font-size:4.75px;color:#555555">carrier_roof</div>
<div class="pill" style="left:42.0px;top:270.31px;height:8.6px;background:#f0f0f0;border-radius:1px;width:53.6px"></div>
<svg style="left:43.0px;top:272.11px" width="8" height="5"><path d="M0.3 2.5C2 0.2 6 0.2 7.7 2.5C6 4.8 2 4.8 0.3 2.5Z" fill="#d9d9d9"/><circle cx="4" cy="2.5" r="1.3" fill="#ececec"/><circle cx="4" cy="2.5" r="0.7" fill="#cfcfcf"/></svg>
<svg style="left:54.0px;top:271.61px" width="8" height="7"><rect x="0.4" y="0.4" width="6.3" height="6" fill="none" stroke="#5f6b78" stroke-width="0.55" rx="0.6"/><path d="M2.2 4.2H3.8" stroke="#777" stroke-width="0.4"/></svg>
<div class="tx rowt" style="left:67.3px;top:273.91px;font-size:4.75px;color:#555555">carrier_arm</div>
<div class="pill" style="left:33.2px;top:280.85499999999996px;height:8.6px;background:#f0f0f0;border-radius:1px;width:50.7px"></div>
<svg style="left:26.5px;top:282.655px" width="5" height="5"><path d="M0.6 0.5L3.9 2.5L0.6 4.5Z" fill="none" stroke="#555" stroke-width="0.85"/></svg>
<svg style="left:36.1px;top:282.655px" width="8" height="5"><path d="M0.3 2.5C2 0.2 6 0.2 7.7 2.5C6 4.8 2 4.8 0.3 2.5Z" fill="#d9d9d9"/><circle cx="4" cy="2.5" r="1.3" fill="#ececec"/><circle cx="4" cy="2.5" r="0.7" fill="#cfcfcf"/></svg>
<svg style="left:47.1px;top:282.655px" width="7" height="5"><rect x="0" y="0" width="6.5" height="5" fill="#858585"/><path d="M0 1.6H6.5M0 3.3H6.5" stroke="#bdbdbd" stroke-width="0.35"/><path d="M2.1 0V5M4.3 0V5" stroke="#bdbdbd" stroke-width="0.3"/></svg>
<div class="tx rowt" style="left:60.400000000000006px;top:284.455px;font-size:4.75px;color:#555555">Sketches</div>
<div class="pill" style="left:33.2px;top:291.4px;height:8.6px;background:#f0f0f0;border-radius:1px;width:57.9px"></div>
<svg style="left:26.5px;top:293.2px" width="5" height="5"><path d="M0.6 0.5L3.9 2.5L0.6 4.5Z" fill="none" stroke="#555" stroke-width="0.85"/></svg>
<svg style="left:36.1px;top:293.2px" width="8" height="5"><path d="M0.3 2.5C2 0.2 6 0.2 7.7 2.5C6 4.8 2 4.8 0.3 2.5Z" fill="#8c8c8c"/><circle cx="4" cy="2.5" r="1.5" fill="#e6e6e6"/><circle cx="4" cy="2.5" r="0.9" fill="#666"/></svg>
<svg style="left:47.1px;top:293.2px" width="7" height="5"><rect x="0" y="0" width="6.5" height="5" fill="#858585"/><path d="M0 1.6H6.5M0 3.3H6.5" stroke="#bdbdbd" stroke-width="0.35"/><path d="M2.1 0V5M4.3 0V5" stroke="#bdbdbd" stroke-width="0.3"/></svg>
<div class="tx rowt" style="left:60.400000000000006px;top:295.0px;font-size:4.75px;color:#555555">Construction</div>
<div class="pill" style="left:33.2px;top:301.945px;height:8.6px;background:#f0f0f0;border-radius:1px;width:99.0px"></div>
<svg style="left:26.5px;top:303.745px" width="5" height="5"><path d="M0.6 0.5L3.9 2.5L0.6 4.5Z" fill="none" stroke="#555" stroke-width="0.85"/></svg>
<svg style="left:36.1px;top:303.745px" width="8" height="5"><path d="M0.3 2.5C2 0.2 6 0.2 7.7 2.5C6 4.8 2 4.8 0.3 2.5Z" fill="#d9d9d9"/><circle cx="4" cy="2.5" r="1.3" fill="#ececec"/><circle cx="4" cy="2.5" r="0.7" fill="#cfcfcf"/></svg>
<svg style="left:47.1px;top:303.245px" width="8" height="6"><rect x="0.4" y="0.4" width="6.2" height="5.4" fill="none" stroke="#7f7f7f" stroke-width="0.5" rx="0.5"/><path d="M2.4 1.2C1.8 2.5 2 4 3 5" stroke="#7f7f7f" stroke-width="0.5" fill="none"/></svg>
<div class="tx rowt" style="left:60.400000000000006px;top:305.545px;font-size:4.75px;color:#555555">Adjustment_Gear_1 (24 teeth):1</div>
<div class="pill" style="left:33.2px;top:312.49px;height:8.6px;background:#f0f0f0;border-radius:1px;width:84.5px"></div>
<svg style="left:26.5px;top:314.29px" width="5" height="5"><path d="M0.6 0.5L3.9 2.5L0.6 4.5Z" fill="none" stroke="#555" stroke-width="0.85"/></svg>
<svg style="left:36.1px;top:314.29px" width="8" height="5"><path d="M0.3 2.5C2 0.2 6 0.2 7.7 2.5C6 4.8 2 4.8 0.3 2.5Z" fill="#d9d9d9"/><circle cx="4" cy="2.5" r="1.3" fill="#ececec"/><circle cx="4" cy="2.5" r="0.7" fill="#cfcfcf"/></svg>
<svg style="left:47.1px;top:313.79px" width="8" height="6"><rect x="0.4" y="0.4" width="6.2" height="5.4" fill="none" stroke="#7f7f7f" stroke-width="0.5" rx="0.5"/><path d="M2.4 1.2C1.8 2.5 2 4 3 5" stroke="#7f7f7f" stroke-width="0.5" fill="none"/></svg>
<div class="tx rowt" style="left:60.400000000000006px;top:316.09000000000003px;font-size:4.75px;color:#555555">Carrier_Gear (24 teeth):1</div>
<div class="pill" style="left:33.2px;top:323.03499999999997px;height:8.6px;background:#f0f0f0;border-radius:1px;width:84.5px"></div>
<svg style="left:26.5px;top:324.835px" width="5" height="5"><path d="M0.6 0.5L3.9 2.5L0.6 4.5Z" fill="none" stroke="#555" stroke-width="0.85"/></svg>
<svg style="left:36.1px;top:324.835px" width="8" height="5"><path d="M0.3 2.5C2 0.2 6 0.2 7.7 2.5C6 4.8 2 4.8 0.3 2.5Z" fill="#d9d9d9"/><circle cx="4" cy="2.5" r="1.3" fill="#ececec"/><circle cx="4" cy="2.5" r="0.7" fill="#cfcfcf"/></svg>
<svg style="left:47.1px;top:324.335px" width="8" height="6"><rect x="0.4" y="0.4" width="6.2" height="5.4" fill="none" stroke="#7f7f7f" stroke-width="0.5" rx="0.5"/><path d="M2.4 1.2C1.8 2.5 2 4 3 5" stroke="#7f7f7f" stroke-width="0.5" fill="none"/></svg>
<div class="tx rowt" style="left:60.400000000000006px;top:326.635px;font-size:4.75px;color:#555555">Carrier_Gear (24 teeth):2</div>
<div class="pill" style="left:33.2px;top:333.58px;height:8.6px;background:#f0f0f0;border-radius:1px;width:74.0px"></div>
<svg style="left:26.5px;top:335.38px" width="5" height="5"><path d="M0.6 0.5L3.9 2.5L0.6 4.5Z" fill="none" stroke="#555" stroke-width="0.85"/></svg>
<svg style="left:36.1px;top:335.38px" width="8" height="5"><path d="M0.3 2.5C2 0.2 6 0.2 7.7 2.5C6 4.8 2 4.8 0.3 2.5Z" fill="#d9d9d9"/><circle cx="4" cy="2.5" r="1.3" fill="#ececec"/><circle cx="4" cy="2.5" r="0.7" fill="#cfcfcf"/></svg>
<svg style="left:47.1px;top:334.88px" width="8" height="6"><rect x="0.4" y="0.4" width="6.2" height="5.4" fill="none" stroke="#7f7f7f" stroke-width="0.5" rx="0.5"/><path d="M2.4 1.2C1.8 2.5 2 4 3 5" stroke="#7f7f7f" stroke-width="0.5" fill="none"/></svg>
<div class="tx rowt" style="left:60.400000000000006px;top:337.18px;font-size:4.75px;color:#555555">Carrier_Bearing_1:1</div>
<div class="pill" style="left:33.2px;top:344.125px;height:8.6px;background:#f0f0f0;border-radius:1px;width:74.0px"></div>
<svg style="left:26.5px;top:345.925px" width="5" height="5"><path d="M0.6 0.5L3.9 2.5L0.6 4.5Z" fill="none" stroke="#555" stroke-width="0.85"/></svg>
<svg style="left:36.1px;top:345.925px" width="8" height="5"><path d="M0.3 2.5C2 0.2 6 0.2 7.7 2.5C6 4.8 2 4.8 0.3 2.5Z" fill="#d9d9d9"/><circle cx="4" cy="2.5" r="1.3" fill="#ececec"/><circle cx="4" cy="2.5" r="0.7" fill="#cfcfcf"/></svg>
<svg style="left:47.1px;top:345.425px" width="8" height="6"><rect x="0.4" y="0.4" width="6.2" height="5.4" fill="none" stroke="#7f7f7f" stroke-width="0.5" rx="0.5"/><path d="M2.4 1.2C1.8 2.5 2 4 3 5" stroke="#7f7f7f" stroke-width="0.5" fill="none"/></svg>
<div class="tx rowt" style="left:60.400000000000006px;top:347.725px;font-size:4.75px;color:#555555">Carrier_Bearing_2:1</div>
<div class="pill" style="left:33.2px;top:354.67px;height:8.6px;background:#f0f0f0;border-radius:1px;width:88.8px"></div>
<svg style="left:26.5px;top:356.47px" width="5" height="5"><path d="M0.6 0.5L3.9 2.5L0.6 4.5Z" fill="none" stroke="#555" stroke-width="0.85"/></svg>
<svg style="left:36.1px;top:356.47px" width="8" height="5"><path d="M0.3 2.5C2 0.2 6 0.2 7.7 2.5C6 4.8 2 4.8 0.3 2.5Z" fill="#d9d9d9"/><circle cx="4" cy="2.5" r="1.3" fill="#ececec"/><circle cx="4" cy="2.5" r="0.7" fill="#cfcfcf"/></svg>
<svg style="left:47.1px;top:355.97px" width="8" height="6"><rect x="0.4" y="0.4" width="6.2" height="5.4" fill="none" stroke="#7f7f7f" stroke-width="0.5" rx="0.5"/><path d="M2.4 1.2C1.8 2.5 2 4 3 5" stroke="#7f7f7f" stroke-width="0.5" fill="none"/></svg>
<div class="tx rowt" style="left:60.400000000000006px;top:358.27000000000004px;font-size:4.75px;color:#555555">Direction_Gear (12 teeth):1</div>
<div class="pill" style="left:33.2px;top:365.215px;height:8.6px;background:#f0f0f0;border-radius:1px;width:100.0px"></div>
<svg style="left:26.5px;top:367.015px" width="5" height="5"><path d="M0.6 0.5L3.9 2.5L0.6 4.5Z" fill="none" stroke="#555" stroke-width="0.85"/></svg>
<svg style="left:36.1px;top:367.015px" width="8" height="5"><path d="M0.3 2.5C2 0.2 6 0.2 7.7 2.5C6 4.8 2 4.8 0.3 2.5Z" fill="#d9d9d9"/><circle cx="4" cy="2.5" r="1.3" fill="#ececec"/><circle cx="4" cy="2.5" r="0.7" fill="#cfcfcf"/></svg>
<svg style="left:47.1px;top:366.515px" width="8" height="6"><rect x="0.4" y="0.4" width="6.2" height="5.4" fill="none" stroke="#7f7f7f" stroke-width="0.5" rx="0.5"/><path d="M2.4 1.2C1.8 2.5 2 4 3 5" stroke="#7f7f7f" stroke-width="0.5" fill="none"/></svg>
<svg style="left:58.3px;top:365.715px" width="9" height="8"><ellipse cx="2.6" cy="5.3" rx="2.2" ry="1.3" transform="rotate(-42 2.6 5.3)" fill="none" stroke="#333" stroke-width="0.75"/><ellipse cx="5.4" cy="2.6" rx="2.2" ry="1.3" transform="rotate(-42 5.4 2.6)" fill="none" stroke="#333" stroke-width="0.75"/></svg>
<div class="tx rowt" style="left:71.7px;top:368.815px;font-size:4.75px;color:#555555">17HS3401_Usongshine v...</div>
<div class="pill" style="left:33.2px;top:375.76px;height:8.6px;background:#f0f0f0;border-radius:1px;width:100.0px"></div>
<svg style="left:26.5px;top:377.56px" width="5" height="5"><path d="M0.6 0.5L3.9 2.5L0.6 4.5Z" fill="none" stroke="#555" stroke-width="0.85"/></svg>
<svg style="left:36.1px;top:377.56px" width="8" height="5"><path d="M0.3 2.5C2 0.2 6 0.2 7.7 2.5C6 4.8 2 4.8 0.3 2.5Z" fill="#8c8c8c"/><circle cx="4" cy="2.5" r="1.5" fill="#e6e6e6"/><circle cx="4" cy="2.5" r="0.9" fill="#666"/></svg>
<svg style="left:47.1px;top:377.06px" width="8" height="6"><rect x="0.4" y="0.4" width="6.2" height="5.4" fill="none" stroke="#7f7f7f" stroke-width="0.5" rx="0.5"/><path d="M2.4 1.2C1.8 2.5 2 4 3 5" stroke="#7f7f7f" stroke-width="0.5" fill="none"/></svg>
<svg style="left:58.3px;top:376.26px" width="9" height="8"><ellipse cx="2.6" cy="5.3" rx="2.2" ry="1.3" transform="rotate(-42 2.6 5.3)" fill="none" stroke="#333" stroke-width="0.75"/><ellipse cx="5.4" cy="2.6" rx="2.2" ry="1.3" transform="rotate(-42 5.4 2.6)" fill="none" stroke="#333" stroke-width="0.75"/></svg>
<div class="tx rowt" style="left:71.7px;top:379.36px;font-size:4.75px;color:#555555">17HS3401_Usongshine v...</div>
<div class="pill" style="left:25.0px;top:386.305px;height:8.6px;background:#f0f0f0;border-radius:1px;width:72.4px"></div>
<svg style="left:18.0px;top:388.105px" width="5" height="5"><path d="M0.6 0.5L3.9 2.5L0.6 4.5Z" fill="none" stroke="#555" stroke-width="0.85"/></svg>
<svg style="left:27.6px;top:388.105px" width="8" height="5"><path d="M0.3 2.5C2 0.2 6 0.2 7.7 2.5C6 4.8 2 4.8 0.3 2.5Z" fill="#d9d9d9"/><circle cx="4" cy="2.5" r="1.3" fill="#ececec"/><circle cx="4" cy="2.5" r="0.7" fill="#cfcfcf"/></svg>
<svg style="left:38.6px;top:387.605px" width="8" height="6"><rect x="0.4" y="0.4" width="6.2" height="5.4" fill="none" stroke="#7f7f7f" stroke-width="0.5" rx="0.5"/><path d="M2.4 1.2C1.8 2.5 2 4 3 5" stroke="#7f7f7f" stroke-width="0.5" fill="none"/></svg>
<div class="tx rowt" style="left:51.900000000000006px;top:389.90500000000003px;font-size:4.75px;color:#555555">Product_Samples:1</div>
<div class="a" style="left:2.5px;top:519.5px;width:131.5px;height:10.5px;background:#efefef;border:0.6px solid #e0e0e0;border-radius:1px"></div>
<div class="tx" style="left:13.4px;top:523px;font-size:4.7px;color:#777">COMMENTS</div>
<svg style="left:123.5px;top:522.5px" width="5" height="5"><circle cx="2.5" cy="2.5" r="1.6" fill="none" stroke="#333" stroke-width="1.1"/></svg>
<div class="a" style="left:1px;top:531px;width:633px;height:22px;background:#f2f2f2"></div>
<div class="a" style="left:1px;top:530.5px;width:633px;height:0.8px;background:#dadada"></div>
<div class="a" style="left:0;top:553px;width:634px;height:2px;background:#5a5a5a"></div>
<div class="a" style="left:633px;top:64px;width:1px;height:436px;background:#e2e2e2"></div>
<div class="a" style="left:633px;top:500px;width:1px;height:55px;background:#9a9a9a"></div>
<div class="tx" style="left:4px;top:532.5px;font-size:2.6px;color:#999">00/00</div>
<svg style="left:0px;top:541.5px" width="60" height="8"><path d="M5.5 0.8V6.2" stroke="#555" stroke-width="0.9"/><path d="M10.2 0.8L6.3 3.5L10.2 6.2Z" fill="#555"/><path d="M21.3 1.2L17 3.5L21.3 5.8Z" fill="#666"/><path d="M27 0.6L32 3.5L27 6.4Z" fill="#444"/><path d="M38 1.2L42.5 3.5L38 5.8Z" fill="#666"/><path d="M49.3 0.8L53.2 3.5L49.3 6.2Z" fill="#555"/><path d="M54 0.8V6.2" stroke="#555" stroke-width="0.9"/></svg>
<svg style="left:0;top:0" width="634" height="555"><path d="M65.3 539.8H71.3V546.3H65.3Z" fill="none" stroke="#b5b5b5" stroke-width="0.6"/><path d="M67.3 544.8L71.3 540.8" stroke="#e9a04a" stroke-width="0.8"/><path d="M76.3 539.8H82.3V546.3H76.3Z" fill="#4d9fe8"/><path d="M82.3 539.8L83.3 538.8V545.3L82.3 546.3" fill="#2f7cc4"/><path d="M88.3 539.8H94.3V546.3H88.3Z" fill="#f6e3c6" stroke="#d9a055" stroke-width="0.6"/><path d="M99.3 539.8H105.3V546.3H99.3Z" fill="none" stroke="#a9a9a9" stroke-width="0.6"/><path d="M102.3 542.8V546.3" stroke="#e9a04a" stroke-width="0.6"/><path d="M109.3 539.8H115.3V546.3H109.3Z" fill="#4d9fe8"/><path d="M115.3 539.8L116.3 538.8V545.3L115.3 546.3" fill="#2f7cc4"/><path d="M120.3 539.8H126.3V546.3H120.3Z" fill="none" stroke="#b5b5b5" stroke-width="0.6"/><path d="M122.3 544.8L126.3 540.8" stroke="#e9a04a" stroke-width="0.8"/><path d="M131.3 539.8H137.3V546.3H131.3Z" fill="#4d9fe8"/><path d="M137.3 539.8L138.3 538.8V545.3L137.3 546.3" fill="#2f7cc4"/><path d="M142.3 539.8H148.3V546.3H142.3Z" fill="#dcdcdc"/><circle cx="145.3" cy="543.1" r="1.8" fill="#4d9fe8"/><circle cx="156.3" cy="543.1" r="2.6" fill="none" stroke="#4d9fe8" stroke-width="0.9"/><path d="M163.3 539.8H169.3V546.3H163.3Z" fill="none" stroke="#b5b5b5" stroke-width="0.6"/><path d="M165.3 544.8L169.3 540.8" stroke="#e9a04a" stroke-width="0.8"/><path d="M175.3 539.3V546.8" stroke="#888" stroke-width="0.5"/><path d="M175.8 539.8H180.3V543.3H175.8Z" fill="#2f86d9"/><path d="M184.3 539.8H190.3V546.3H184.3Z" fill="#4d9fe8"/><path d="M190.3 539.8L191.3 538.8V545.3L190.3 546.3" fill="#2f7cc4"/><path d="M195.3 539.8H201.3V546.3H195.3Z" fill="none" stroke="#a9a9a9" stroke-width="0.6"/><path d="M198.3 542.8V546.3" stroke="#e9a04a" stroke-width="0.6"/><path d="M205.3 539.8H211.3V546.3H205.3Z" fill="#4d9fe8"/><path d="M211.3 539.8L212.3 538.8V545.3L211.3 546.3" fill="#2f7cc4"/><path d="M216.3 539.8H222.3V546.3H216.3Z" fill="#4d9fe8"/><path d="M222.3 539.8L223.3 538.8V545.3L222.3 546.3" fill="#2f7cc4"/><path d="M226.3 540.3L229.3 539.3V546.3L226.3 547.3Z" fill="#3fae6a"/><path d="M230.3 540.3L233.3 539.3V546.3L230.3 547.3Z" fill="#ee8a4a"/><path d="M236.3 539.8H242.3V546.3H236.3Z" fill="none" stroke="#b5b5b5" stroke-width="0.6"/><path d="M238.3 544.8L242.3 540.8" stroke="#e9a04a" stroke-width="0.8"/><path d="M246.3 539.8H252.3V546.3H246.3Z" fill="#f7e6cf"/><circle cx="249.3" cy="543.1" r="2.2" fill="none" stroke="#e9a04a" stroke-width="0.8"/><path d="M257.3 542.8H264.3" stroke="#777" stroke-width="1.2" stroke-dasharray="1 0.6"/><path d="M269.3 539.8C268.3 542.8 269.3 545.8 271.3 546.3C274.3 545.8 275.3 542.8 274.3 539.8" fill="none" stroke="#9a9a9a" stroke-width="0.8"/><path d="M271.8 539.8V543.8" stroke="#9a9a9a" stroke-width="0.7"/><path d="M281.3 539.3V546.8" stroke="#888" stroke-width="0.5"/><path d="M281.8 539.8H286.3V543.3H281.8Z" fill="#2f86d9"/><path d="M290.3 542.8H297.3" stroke="#777" stroke-width="1.2" stroke-dasharray="1 0.6"/><path d="M302.3 539.8C301.3 542.8 302.3 545.8 304.3 546.3C307.3 545.8 308.3 542.8 307.3 539.8" fill="none" stroke="#9a9a9a" stroke-width="0.8"/><path d="M304.8 539.8V543.8" stroke="#9a9a9a" stroke-width="0.7"/><path d="M311.3 542.8H318.3" stroke="#777" stroke-width="1.2" stroke-dasharray="1 0.6"/><path d="M323.3 539.8C322.3 542.8 323.3 545.8 325.3 546.3C328.3 545.8 329.3 542.8 328.3 539.8" fill="none" stroke="#9a9a9a" stroke-width="0.8"/><path d="M325.8 539.8V543.8" stroke="#9a9a9a" stroke-width="0.7"/><path d="M333.3 542.8H340.3" stroke="#777" stroke-width="1.2" stroke-dasharray="1 0.6"/><path d="M345.3 539.8C344.3 542.8 345.3 545.8 347.3 546.3C350.3 545.8 351.3 542.8 350.3 539.8" fill="none" stroke="#9a9a9a" stroke-width="0.8"/><path d="M347.8 539.8V543.8" stroke="#9a9a9a" stroke-width="0.7"/><path d="M356.8 539.3V546.8M353.3 543.1H360.3" stroke="#333" stroke-width="0.8"/><path d="M364.3 539.8H370.3V546.3H364.3Z" fill="#f6e3c6" stroke="#d9a055" stroke-width="0.6"/><path d="M377.3 539.3V546.8" stroke="#888" stroke-width="0.5"/><path d="M377.8 539.8H382.3V543.3H377.8Z" fill="#2f86d9"/><path d="M387.3 539.8C386.3 542.8 387.3 545.8 389.3 546.3C392.3 545.8 393.3 542.8 392.3 539.8" fill="none" stroke="#9a9a9a" stroke-width="0.8"/><path d="M389.8 539.8V543.8" stroke="#9a9a9a" stroke-width="0.7"/><path d="M397.3 539.8C396.3 542.8 397.3 545.8 399.3 546.3C402.3 545.8 403.3 542.8 402.3 539.8" fill="none" stroke="#9a9a9a" stroke-width="0.8"/><path d="M399.8 539.8V543.8" stroke="#9a9a9a" stroke-width="0.7"/><path d="M408.3 539.8C407.3 542.8 408.3 545.8 410.3 546.3C413.3 545.8 414.3 542.8 413.3 539.8" fill="none" stroke="#9a9a9a" stroke-width="0.8"/><path d="M410.8 539.8V543.8" stroke="#9a9a9a" stroke-width="0.7"/><path d="M418.3 545.8L423.3 539.8" stroke="#4aa84a" stroke-width="1.6"/><path d="M427.3 540.3L430.3 539.3V546.3L427.3 547.3Z" fill="#3fae6a"/><path d="M431.3 540.3L434.3 539.3V546.3L431.3 547.3Z" fill="#ee8a4a"/><path d="M438.3 539.8H444.3V546.3H438.3Z" fill="none" stroke="#b5b5b5" stroke-width="0.6"/><path d="M440.3 544.8L444.3 540.8" stroke="#e9a04a" stroke-width="0.8"/><path d="M449.3 540.3H456.3V546.3H449.3Z" fill="#4d9fe8"/><path d="M449.3 546.3L452.3 542.8L456.3 546.3Z" fill="#a7d2f4"/><path d="M459.3 542.8H466.3" stroke="#777" stroke-width="1.2" stroke-dasharray="1 0.6"/><path d="M469.3 539.8C468.3 542.8 469.3 545.8 471.3 546.3C474.3 545.8 475.3 542.8 474.3 539.8" fill="none" stroke="#9a9a9a" stroke-width="0.8"/><path d="M471.8 539.8V543.8" stroke="#9a9a9a" stroke-width="0.7"/><path d="M479.3 542.8H486.3" stroke="#777" stroke-width="1.2" stroke-dasharray="1 0.6"/><path d="M491.3 539.8C490.3 542.8 491.3 545.8 493.3 546.3C496.3 545.8 497.3 542.8 496.3 539.8" fill="none" stroke="#9a9a9a" stroke-width="0.8"/><path d="M493.8 539.8V543.8" stroke="#9a9a9a" stroke-width="0.7"/><path d="M501.3 539.3V546.8" stroke="#888" stroke-width="0.5"/><path d="M501.8 539.8H506.3V543.3H501.8Z" fill="#2f86d9"/><path d="M511.3 539.8H517.3V546.3H511.3Z" fill="#f6e3c6" stroke="#d9a055" stroke-width="0.6"/><path d="M521.3 539.8H527.3V546.3H521.3Z" fill="#4d9fe8"/><path d="M527.3 539.8L528.3 538.8V545.3L527.3 546.3" fill="#2f7cc4"/><path d="M532.3 539.8H538.3V546.3H532.3Z" fill="none" stroke="#b5b5b5" stroke-width="0.6"/><path d="M534.3 544.8L538.3 540.8" stroke="#e9a04a" stroke-width="0.8"/><path d="M543.3 539.8H549.3V546.3H543.3Z" fill="#4d9fe8"/><path d="M549.3 539.8L550.3 538.8V545.3L549.3 546.3" fill="#2f7cc4"/><path d="M553.3 539.8H559.3V546.3H553.3Z" fill="#d2d2d2" stroke="#8a8a8a" stroke-width="0.5"/><path d="M554.3 541.8H558.3M554.3 543.8H558.3" stroke="#999" stroke-width="0.4"/><path d="M565.3 539.3V546.8" stroke="#888" stroke-width="0.5"/><path d="M565.8 539.8H570.3V543.3H565.8Z" fill="#2f86d9"/><path d="M575.3 539.8H581.3V546.3H575.3Z" fill="#4d9fe8"/><path d="M581.3 539.8L582.3 538.8V545.3L581.3 546.3" fill="#2f7cc4"/><path d="M585.3 539.8H591.3V546.3H585.3Z" fill="#4d9fe8"/><path d="M591.3 539.8L592.3 538.8V545.3L591.3 546.3" fill="#2f7cc4"/><path d="M597.3 539.3V546.8" stroke="#888" stroke-width="0.5"/><path d="M597.8 539.8H602.3V543.3H597.8Z" fill="#2f86d9"/><path d="M607.3 539.8H613.3V546.3H607.3Z" fill="#4d9fe8"/><path d="M613.3 539.8L614.3 538.8V545.3L613.3 546.3" fill="#2f7cc4"/><path d="M65 549.3H612" stroke="#cfcfcf" stroke-width="0.5"/><path d="M66 549.3H470" stroke="#bdbdbd" stroke-width="0.5" stroke-dasharray="0.6 9.6"/></svg>
<svg style="left:0;top:0" width="634" height="555"><rect x="86.2" y="547.6" width="3.6" height="3.4" fill="#fff" stroke="#333" stroke-width="0.8"/><rect x="256.2" y="547.6" width="3.6" height="3.4" fill="#fff" stroke="#333" stroke-width="0.8"/><rect x="288.2" y="547.6" width="3.6" height="3.4" fill="#fff" stroke="#333" stroke-width="0.8"/><rect x="308.7" y="547.6" width="3.6" height="3.4" fill="#fff" stroke="#333" stroke-width="0.8"/><rect x="330.2" y="547.6" width="3.6" height="3.4" fill="#fff" stroke="#333" stroke-width="0.8"/><rect x="456.7" y="547.6" width="3.6" height="3.4" fill="#fff" stroke="#333" stroke-width="0.8"/><rect x="478.2" y="547.6" width="3.6" height="3.4" fill="#fff" stroke="#333" stroke-width="0.8"/><path d="M86 549.3H480" stroke="#444" stroke-width="0.45"/></svg>
<svg style="left:621px;top:541.5px" width="7" height="7"><circle cx="3.5" cy="3.5" r="2.1" fill="none" stroke="#444" stroke-width="1.4"/><circle cx="3.5" cy="3.5" r="3" fill="none" stroke="#444" stroke-width="0.6" stroke-dasharray="0.9 0.7"/></svg>
<div class="a" style="left:265px;top:519px;width:104px;height:10.5px;background:#f0f0f0;border-radius:1px"></div>
<div class="a" style="left:291px;top:519px;width:11px;height:10.5px;background:#1f86d8"></div>
<svg style="left:265px;top:519px" width="104" height="11"><path d="M5 2V8.5M1.8 5.2H8.2" stroke="#666" stroke-width="0.9"/><circle cx="5" cy="5.2" r="1.3" fill="#888"/><path d="M11 5L12.2 6.2L13.4 5" fill="#555"/><path d="M17 7.5H23V4.5C23 3 21 2.5 20 2.5S17 3 17 4.5Z" fill="#8a8a8a"/><path d="M28.5 8V4.3C28.5 3 30 3 30 4.3V3.2C30 2 31.5 2 31.5 3.2V3.6C31.5 2.6 33 2.6 33 3.6V8Z" fill="#fff"/><circle cx="39.2" cy="4.5" r="2" fill="none" stroke="#666" stroke-width="0.8"/><path d="M40.6 6L42 7.6" stroke="#666" stroke-width="0.9"/><circle cx="53" cy="4.6" r="2.3" fill="none" stroke="#555" stroke-width="0.8"/><path d="M54.6 6.3L56.3 8" stroke="#555" stroke-width="1"/><path d="M58 5L59.2 6.2L60.4 5" fill="#555"/><rect x="63" y="2.5" width="6.2" height="4.5" fill="#4f8fcf"/><path d="M65 8H67.2" stroke="#555" stroke-width="0.6"/><path d="M70.5 5L71.7 6.2L72.9 5" fill="#555"/><rect x="76" y="2.5" width="6.5" height="5" fill="#8a8a8a"/><path d="M83.5 5L84.7 6.2L85.9 5" fill="#555"/><rect x="89" y="2.5" width="6.5" height="5" fill="#6f8fb9"/><path d="M92.2 2.5V7.5M89 5H95.5" stroke="#dde" stroke-width="0.5"/><path d="M96.5 5L97.7 6.2L98.9 5" fill="#555"/></svg></body></html>
